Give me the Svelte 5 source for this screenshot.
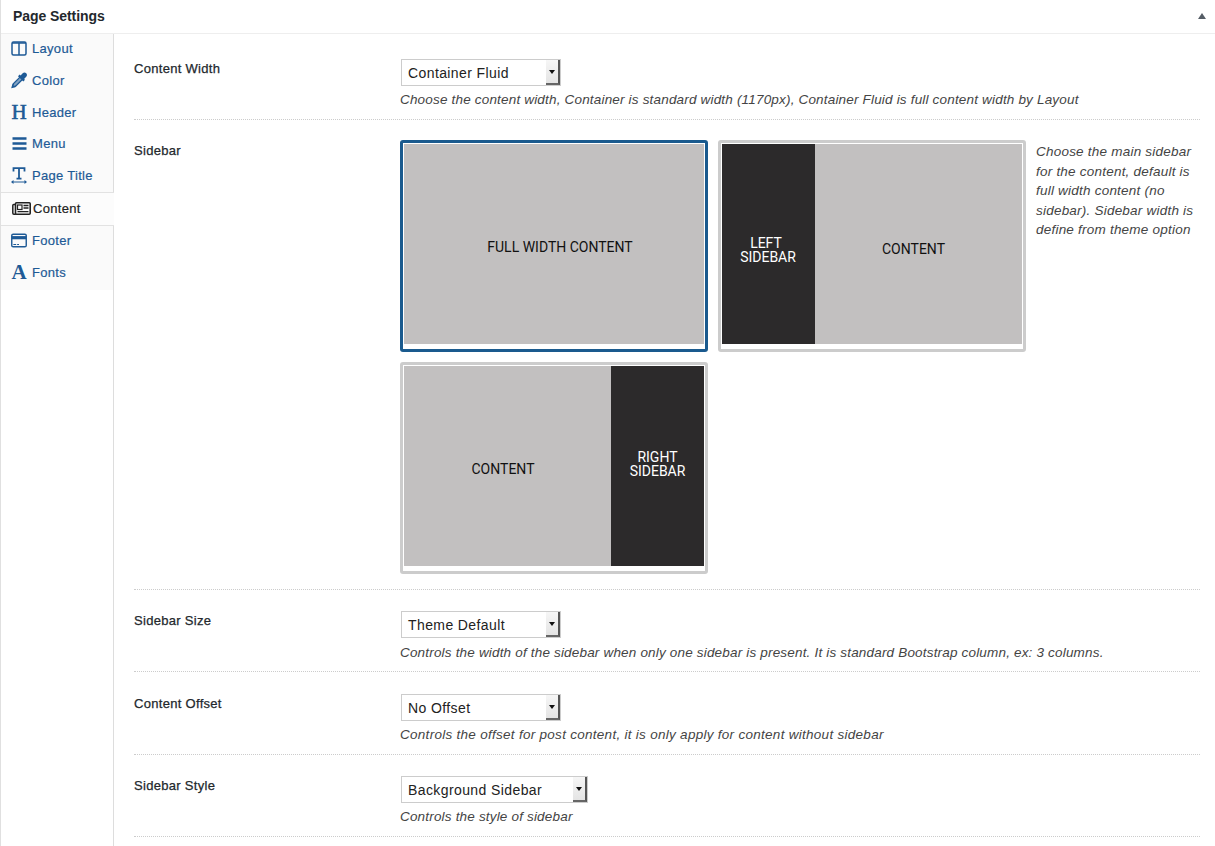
<script>
  const tabs = [
    { id: 'layout', label: 'Layout' },
    { id: 'color', label: 'Color' },
    { id: 'header', label: 'Header' },
    { id: 'menu', label: 'Menu' },
    { id: 'title', label: 'Page Title' },
    { id: 'content', label: 'Content', active: true },
    { id: 'footer', label: 'Footer' },
    { id: 'fonts', label: 'Fonts' }
  ];
</script>

<div class="box">
  <header class="head">
    <h2>Page Settings</h2>
    <span class="toggle"></span>
  </header>
  <div class="body">
    <nav class="tabs">
      <ul>
        {#each tabs as t}
          <li class:active={t.active}>
            <span class="ico">
              {#if t.id === 'layout'}
                <svg width="16" height="15" viewBox="0 0 16 15"><rect x="1" y="1" width="14" height="13" rx="1.5" fill="none" stroke="currentColor" stroke-width="1.500"/><path d="M1 2h14" stroke="currentColor" stroke-width="1.500"/><path d="M8 2v12" stroke="currentColor" stroke-width="1.500"/></svg>
              {:else if t.id === 'color'}
                <svg width="17" height="17" viewBox="0 0 16 16"><path d="M15.200.8c-1-1-2.500-1-3.500 0L9.600 2.900 8.700 2 7 3.700l1 1-6.300 6.300c-.4.4-.6.9-.6 1.400L.2 15.800l3.400-.9c.5 0 1-.2 1.400-.6L11.300 8l1 1L14 7.300l-.9-.9 2.100-2.100c1-1 1-2.500 0-3.500z" fill="currentColor"/><path d="M8.900 5.600 3.200 11.300l-.6 2.100 2.100-.6 5.700-5.700z" fill="#fafafa" opacity=".45"/></svg>
              {:else if t.id === 'header'}
                <span class="glyph h">H</span>
              {:else if t.id === 'menu'}
                <svg width="15" height="13" viewBox="0 0 15 13"><path d="M.5 1.500h14M.5 6.500h14M.5 11.500h14" stroke="currentColor" stroke-width="2.500"/></svg>
              {:else if t.id === 'title'}
                <svg width="16" height="17" viewBox="0 0 16 17"><path d="M2.500 4.500V1.200h11v3.300M8 1.200v10.600M5.500 11.600h5" fill="none" stroke="currentColor" stroke-width="1.800"/><path d="M1.500 15h13" stroke="currentColor" stroke-width="1"/><path d="M0 15l2.500-2v4zM16 15l-2.500-2v4z" fill="currentColor"/></svg>
              {:else if t.id === 'content'}
                <svg width="19" height="13" viewBox="0 0 19 13"><rect x="3.500" y=".8" width="14.700" height="11.400" rx="1" fill="none" stroke="currentColor" stroke-width="1.600"/><path d="M3.500 2.500H1.700c-.5 0-.9.400-.9.900v7.700c0 .6.500 1.100 1.100 1.100h2" fill="none" stroke="currentColor" stroke-width="1.500"/><rect x="5.500" y="3" width="4.500" height="4.500" fill="none" stroke="currentColor" stroke-width="1.200"/><path d="M11.500 3.500h5M11.500 6h5M5.500 9.700h11" stroke="currentColor" stroke-width="1.300"/></svg>
              {:else if t.id === 'footer'}
                <svg width="17" height="15" viewBox="0 0 17 15"><rect x=".8" y=".8" width="15.400" height="13.400" rx="1.500" fill="none" stroke="currentColor" stroke-width="1.500"/><path d="M1 4.500h15" stroke="currentColor" stroke-width="3.400"/><path d="M2.500 11.700h3M6.500 11.700h2" stroke="currentColor" stroke-width="1.200"/></svg>
              {:else if t.id === 'fonts'}
                <span class="glyph a">A</span>
              {/if}
            </span>
            <a href="#{t.id}">{t.label}</a>
          </li>
        {/each}
      </ul>
    </nav>

    <div class="fields">
      <section class="row first">
        <div class="label">Content Width</div>
        <div class="ctl">
          <div class="select w160"><span>Container Fluid</span><i></i></div>
          <p class="desc">Choose the content width, Container is standard width (1170px), Container Fluid is full content width by Layout</p>
        </div>
      </section>

      <section class="row sidebar">
        <div class="label">Sidebar</div>
        <div class="ctl split">
          <div class="options">
            <div class="opt selected"><div class="shot"><div class="pane light full">FULL WIDTH CONTENT</div></div></div>
            <div class="opt"><div class="shot"><div class="pane dark left"><span><span class="lft">LEFT</span><br />SIDEBAR</span></div><div class="pane light c2">CONTENT</div></div></div>
            <div class="opt"><div class="shot"><div class="pane light c3">CONTENT</div><div class="pane dark right"><span>RIGHT<br />SIDEBAR</span></div></div></div>
          </div>
          <p class="desc side">Choose the main sidebar for the content, default is full width content (no sidebar). Sidebar width is define from theme option</p>
        </div>
      </section>

      <section class="row">
        <div class="label">Sidebar Size</div>
        <div class="ctl">
          <div class="select w160"><span>Theme Default</span><i></i></div>
          <p class="desc">Controls the width of the sidebar when only one sidebar is present. It is standard Bootstrap column, ex: 3 columns.</p>
        </div>
      </section>

      <section class="row">
        <div class="label">Content Offset</div>
        <div class="ctl">
          <div class="select w160"><span>No Offset</span><i></i></div>
          <p class="desc wide">Controls the offset for post content, it is only apply for content without sidebar</p>
        </div>
      </section>

      <section class="row">
        <div class="label">Sidebar Style</div>
        <div class="ctl">
          <div class="select w187"><span>Background Sidebar</span><i></i></div>
          <p class="desc">Controls the style of sidebar</p>
        </div>
      </section>
    </div>
  </div>
</div>

<style>
  :global(body) {
    margin: 0;
    background: #fff;
    overflow: hidden;
  }
  .box {
    height: 846px;
    box-sizing: border-box;
    border-left: 1px solid #e0e0e0;
    font-family: "Liberation Sans", Arial, sans-serif;
    font-size: 13px;
    color: #32373c;
    overflow: hidden;
  }
  .head {
    border-bottom: 1px solid #eee;
    display: flex;
    align-items: center;
    justify-content: space-between;
    padding: 0 10px 2px 12px;
    height: 31px;
  }
  h2 {
    margin: 0;
    font-size: 14px;
    font-weight: 600;
    letter-spacing: -0.07px;
    color: #23282d;
  }
  .toggle {
    width: 0;
    height: 0;
    border-left: 4px solid transparent;
    border-right: 4px solid transparent;
    border-bottom: 6px solid #555d66;
    margin-right: -1px;
    margin-top: 1px;
  }
  .body {
    display: flex;
    height: 812px;
  }
  .tabs {
    width: 112px;
    flex: none;
    border-right: 1px solid #ddd;
  }
  ul {
    list-style: none;
    margin: 0;
    padding: 0.300px 0 0.700px;
    background: #fafafa;
  }
  li {
    height: 31.550px;
    display: flex;
    align-items: center;
    padding: 0 0 2px 10px;
    gap: 5px;
    box-sizing: border-box;
    color: #1e5a96;
  }
  li:first-child {
    padding-bottom: 3px;
  }
  li.active {
    height: 34px;
    margin-right: -1px;
    padding: 0 0 1px 11px;
    gap: 2px;
    background: #fcfcfc;
    border-top: 1px solid #e2e2e2;
    border-bottom: 1px solid #e2e2e2;
    color: #222;
  }
  li a {
    color: inherit;
    text-decoration: none;
    -webkit-text-stroke: 0.2px currentColor;
    letter-spacing: 0.3px;
  }
  .ico {
    width: 16px;
    height: 17px;
    flex: none;
    display: flex;
    align-items: center;
    justify-content: center;
  }
  li.active .ico {
    width: 19px;
  }
  .glyph {
    font-family: "Liberation Serif", serif;
    line-height: 1;
  }
  .h {
    font-size: 21px;
    font-weight: 400;
    -webkit-text-stroke: 0.6px currentColor;
  }
  .a {
    font-size: 21px;
    font-weight: 700;
  }
  .fields {
    flex: 1;
    padding: 0 15px 0 20px;
    min-width: 0;
  }
  .row {
    display: flex;
    border-bottom: 1px dotted #ccc;
    padding-top: 21.400px;
    height: 82.300px;
    box-sizing: border-box;
  }
  .row.first {
    padding-top: 25px;
    height: 86px;
  }
  .row.sidebar {
    padding-top: 20px;
    height: 470px;
  }
  .label {
    width: 266px;
    flex: none;
    margin-top: 1px;
    color: #23282d;
    -webkit-text-stroke: 0.25px currentColor;
    letter-spacing: 0.3px;
    line-height: 18px;
  }
  .sidebar .label {
    margin-top: 2px;
  }
  .ctl {
    flex: 1;
    min-width: 0;
  }
  .select {
    height: 27px;
    box-sizing: border-box;
    border: 1px solid #ccc;
    margin-left: 1px;
    display: flex;
    align-items: center;
    justify-content: space-between;
    font-size: 14px;
    letter-spacing: 0.4px;
    color: #222;
    background: #fff;
    padding: 1px 0 0 6px;
  }
  .w160 { width: 160px; }
  .w187 { width: 187px; }
  .select i {
    width: 14px;
    height: 25px;
    box-sizing: border-box;
    background: linear-gradient(#f6f6f6, #e4e4e4);
    border-right: 2px solid #555;
    border-bottom: 2px solid #666;
    position: relative;
    margin-top: -1px;
  }
  .select i::after {
    content: "";
    position: absolute;
    left: 3px;
    top: 10px;
    border-left: 3px solid transparent;
    border-right: 3px solid transparent;
    border-top: 4px solid #111;
  }
  .desc {
    margin: 4.500px 0 0;
    font-style: italic;
    font-size: 13.500px;
    line-height: 19px;
    color: #444;
    letter-spacing: 0.18px;
  }
  .first .desc {
    margin-top: 4px;
  }
  .desc.wide {
    letter-spacing: 0.28px;
  }
  .split {
    display: flex;
  }
  .options {
    width: 636px;
    flex: none;
    display: flex;
    flex-wrap: wrap;
    gap: 10px;
    align-content: flex-start;
  }
  .opt {
    width: 308px;
    height: 212px;
    box-sizing: border-box;
    border: 3px solid #ccc;
    border-radius: 3px;
    padding: 1px 1px 5px;
    background: #fff;
  }
  .opt.selected {
    border-color: #1a5a8e;
  }
  .shot {
    display: flex;
    height: 200px;
    font-family: Roboto, sans-serif;
    font-size: 14px;
    line-height: 14px;
    text-align: center;
  }
  .pane {
    display: flex;
    align-items: center;
    justify-content: center;
    box-sizing: border-box;
  }
  .light {
    flex: 1;
    background: #c2c0c0;
    color: #111;
  }
  .dark {
    width: 93px;
    flex: none;
    background: #2c2a2b;
    color: #fff;
  }
  .full { padding: 6px 0 0 12px; }
  .c2 { padding: 10px 10px 0 0; }
  .c3 { padding: 6px 9px 0 0; }
  .left { padding: 12px 1px 0 0; }
  .right { padding: 0 0 4px 0; }
  .lft { padding-right: 4px; }
  .desc.side {
    margin: 2px 0 0;
    width: 164px;
    line-height: 19.500px;
    letter-spacing: 0.22px;
  }
</style>
